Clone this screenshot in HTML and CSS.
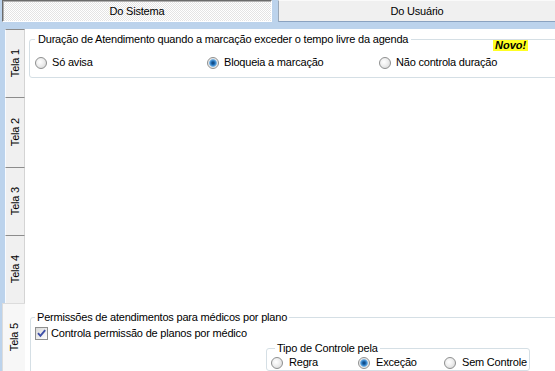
FILE: index.html
```html
<!DOCTYPE html>
<html lang="pt-BR">
<head>
<meta charset="utf-8">
<title>Configuração</title>
<link rel="stylesheet" href="styles.css">
</head>
<body>
<div class="screen">
  <div class="topbar">
    <div class="btn pressed">Do Sistema</div>
    <div class="btn raised">Do Usuário</div>
  </div>
  <div class="main">
    <div class="tabs">
      <div class="tab"><span>Tela 1</span></div>
      <div class="tab t2"><span>Tela 2</span></div>
      <div class="tab"><span>Tela 3</span></div>
      <div class="tab"><span>Tela 4</span></div>
      <div class="tab active"><span>Tela 5</span></div>
    </div>
    <div class="panel">
      <fieldset class="group g1">
        <legend>Duração de Atendimento quando a marcação exceder o tempo livre da agenda</legend>
        <div class="opts1">
          <label class="opt"><span class="radio"></span>Só avisa</label>
          <label class="opt"><span class="radio on"></span>Bloqueia a marcação</label>
          <label class="opt"><span class="radio"></span>Não controla duração</label>
        </div>
      </fieldset>
      <span class="novo">Novo!</span>
      <fieldset class="group g2">
        <legend>Permissões de atendimentos para médicos por plano</legend>
        <label class="chk"><span class="checkbox"><svg width="11" height="11" viewBox="0 0 11 11"><path d="M2 5.2 L4.4 7.8 L9.2 2.2" fill="none" stroke="#3d4fa8" stroke-width="1.9"/></svg></span>Controla permissão de planos por médico</label>
        <fieldset class="group g3">
          <legend>Tipo de Controle pela</legend>
          <div class="opts3">
            <label class="opt"><span class="radio"></span>Regra</label>
            <label class="opt"><span class="radio on"></span>Exceção</label>
            <label class="opt"><span class="radio"></span>Sem Controle</label>
          </div>
        </fieldset>
      </fieldset>
    </div>
  </div>
</div>
</body>
</html>
```
FILE: styles.css
```css
* { box-sizing: border-box; }
html, body { margin: 0; padding: 0; }
body {
  width: 555px;
  height: 371px;
  overflow: hidden;
  background: #bcd3ec;
  font-family: "Liberation Sans", Arial, sans-serif;
  font-size: 11px;
  letter-spacing: -0.2px;
  color: #000;
}
.screen { display: flex; flex-direction: column; height: 371px; }
.topbar { display: flex; height: 22px; gap: 6px; }
.btn {
  display: flex;
  align-items: center;
  justify-content: center;
  height: 22px;
  line-height: 13px;
}
.pressed {
  margin-left: 2px;
  width: 270px;
  border-top: 1px solid #6b6b6b;
  border-left: 1px solid #6b6b6b;
  border-right: 1px solid #ffffff;
  border-bottom: 1px solid #ffffff;
  background: repeating-conic-gradient(#ffffff 0 25%, #e4e4e4 0 50%) 0 0 / 2px 2px;
  box-shadow: inset 1px 1px 0 #b0b0b0;
}
.raised {
  flex: 1;
  background: #f0f0f0;
  border-left: 1px solid #9aa8b8;
  border-bottom: 1px solid #8aa2c0;
  border-top: 1px solid #fafafa;
}
.main { display: flex; flex: 1; margin-top: 7px; min-height: 0; }
.tabs { width: 25px; display: flex; flex-direction: column; flex: none; }
.tab {
  height: 68px;
  margin-left: 5px;
  background: #f0f0f0;
  border-left: 1px solid #f8fbff;
  border-top: 1px solid #8c8c8c;
  border-right: 1px solid #d4d4d4;
  display: flex;
  align-items: center;
  justify-content: center;
}
.tab.t2 { height: 70px; }
.tab.active {
  flex: 1;
  margin-left: 2px;
  background: #f7f7f7;
  border-top: 1px solid #dcdcdc;
  border-left: 1px solid #dcdcdc;
  border-right: none;
}
.tab span {
  writing-mode: vertical-rl;
  transform: rotate(180deg);
  line-height: 13px;
  white-space: nowrap;
}
.panel {
  flex: 1;
  background: #ffffff;
  display: flex;
  flex-direction: column;
  position: relative;
  overflow: hidden;
}
.group {
  border: 1px solid #d5dfe5;
  border-radius: 3px;
  margin: 0;
  min-width: 0;
}
.group legend { line-height: 13px; padding: 0 2px; }
.g1 { margin: 4px -12px 0 4px; padding: 0 0 8px 5px; }
.g1 legend { padding: 0 3px; }
.opts1 {
  display: grid;
  grid-template-columns: 172px 172px 172px;
  margin-top: 10px;
}
.opt { display: flex; align-items: center; gap: 5px; line-height: 13px; white-space: nowrap; }
.radio {
  flex: none;
  width: 12px;
  height: 12px;
  border-radius: 50%;
  border: 1px solid #8e8f8f;
  background: radial-gradient(circle at 40% 40%, #ffffff 0, #f0f0f0 40%, #d2d2d2 100%);
}
.radio.on {
  background: radial-gradient(circle at 50% 50%, #0d3d6e 0, #1c64aa 1.6px, #5aa6e4 3.3px, #e4e4e4 4.2px, #f6f6f6 5.5px);
}
.novo {
  position: absolute;
  top: 11px;
  left: 468px;
  background: #ffff22;
  font-weight: 900;
  font-style: italic;
  font-size: 11px;
  line-height: 11px;
  letter-spacing: 0;
  padding: 0 2px;
}
.g2 { margin: 233px -12px -30px 5px; padding: 0 0 30px 4px; }
.chk { display: flex; align-items: center; gap: 3px; margin-top: 3px; line-height: 13px; }
.checkbox {
  flex: none;
  width: 13px;
  height: 13px;
  border: 1px solid #8e8f8f;
  background: linear-gradient(135deg, #d8d8d8, #ffffff);
  display: flex;
  align-items: center;
  justify-content: center;
}
.checkbox svg { display: block; }
.g3 { margin: 2px 0 0 231px; width: 264px; padding: 0 0 1px 4px; }
.g3 legend { margin-left: 4px; }
.opts3 {
  display: grid;
  grid-template-columns: 87px 86px 86px;
  margin-top: 1px;
}
.opts3 .opt { gap: 6px; }
```
